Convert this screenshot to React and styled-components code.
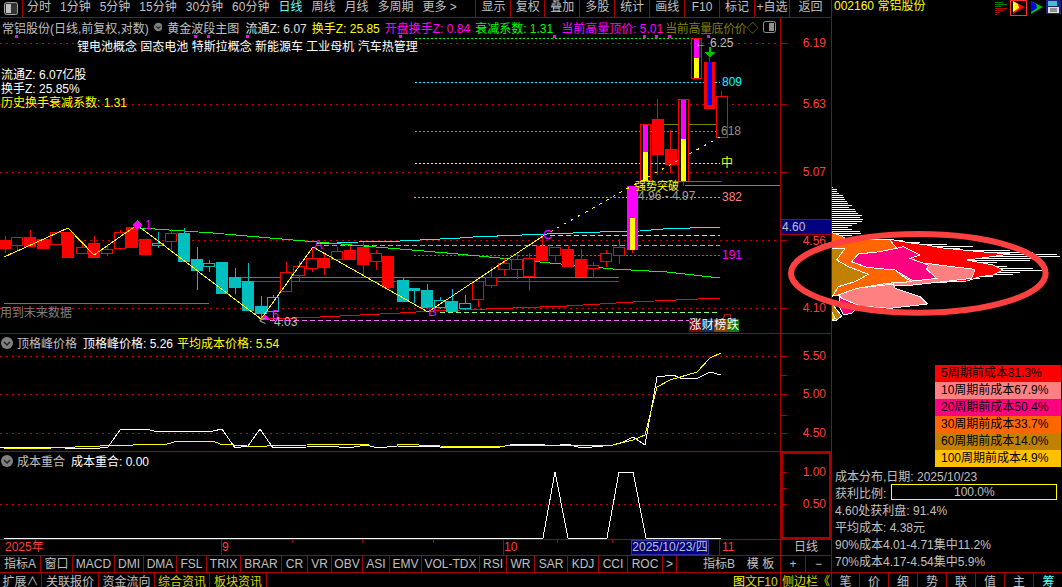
import React from 'react'
import styled, { createGlobalStyle } from 'styled-components'

const LINE = '#a80000'
const GRID = '#d00000'
const GREY = '#c0c0c0'
const AXIS = '#ff3c3c'
const YELLOW = '#ffff00'

const Global = createGlobalStyle`
  html, body { margin: 0; background: #000; }
  body { font: 12px "Liberation Sans", "Noto Sans CJK SC", sans-serif; color: ${GREY}; }
`

const Page = styled.div`
  position: relative;
  display: flex;
  width: 1062px;
  height: 587px;
  overflow: hidden;
  background: #000;
  white-space: nowrap;
`

const Left = styled.div`
  display: flex;
  flex-direction: column;
  width: 832px;
  border-right: 1px solid ${LINE};
  box-sizing: border-box;
`

const Toolbar = styled.div`
  display: flex;
  height: 18px;
  flex: none;
  border-bottom: 1px solid ${LINE};
  box-sizing: border-box;
  line-height: 15px;
`

const ToggleBox = styled.div`
  display: flex;
  align-items: center;
  justify-content: center;
  width: 22px;
  border-right: 1px solid ${LINE};
`

const Periods = styled.div`
  display: flex;
  gap: 9px;
  width: 453px;
  padding-left: 4px;
  box-sizing: border-box;
`

const Period = styled.span`
  color: ${p => (p.$on ? '#54ffff' : GREY)};
`

const ToolButton = styled.div`
  width: ${p => p.$w}px;
  border-left: 1px solid ${LINE};
  box-sizing: border-box;
  text-align: center;
`

const Pane = styled.div`
  position: relative;
  display: flex;
  height: ${p => p.$h}px;
  flex: none;
  border-bottom: 1px solid ${LINE};
  box-sizing: border-box;
`

const Plot = styled.svg`
  display: block;
  width: 780px;
  flex: none;
  border-right: 1px solid ${LINE};
  box-sizing: content-box;
  shape-rendering: crispEdges;
`

const AxisBox = styled.svg`
  display: block;
  flex: 1;
  min-width: 0;
  box-sizing: border-box;
  outline: ${p => (p.$selected ? `2px solid ${LINE}` : 'none')};
  outline-offset: -2px;
  shape-rendering: crispEdges;
`

const Overlay = styled.div`
  position: absolute;
  inset: 0 52px 0 0;
  display: flex;
  flex-direction: column;
  pointer-events: none;
`

const InfoRow = styled.div`
  display: flex;
  align-items: center;
  gap: 5px;
  height: 18px;
  padding: 0 3px 0 2px;
`

const Info = styled.span`
  color: ${p => p.$c || GREY};
  margin-right: ${p => p.$mr || 0}px;
  letter-spacing: ${p => p.$ls || 0}px;
`

const InfoEnd = styled.div`
  display: flex;
  margin-left: auto;
`

const Tags = styled.div`
  margin: 4px 0 0 77px;
  color: #fff;
  line-height: 14px;
`

const Notes = styled.div`
  display: flex;
  flex-direction: column;
  margin: 14px 0 0 1px;
  line-height: 14px;
  color: #fff;
`

const Note = styled.div`
  color: ${p => p.$c || '#fff'};
`

const PaneTitle = styled.div`
  display: flex;
  align-items: center;
  gap: 4px;
  height: 17px;
  padding-left: 1px;
`

const PriceTag = styled.div`
  position: absolute;
  left: 781px;
  top: 201px;
  width: 50px;
  height: 16px;
  background: #000080;
  border-top: 1px solid ${LINE};
  border-bottom: 1px solid ${LINE};
  box-sizing: border-box;
  padding-left: 1px;
  line-height: 14px;
  color: ${GREY};
`

const BadgeRow = styled.div`
  position: absolute;
  left: 689px;
  top: 301px;
  display: flex;
`

const Badge = styled.span`
  width: 12.5px;
  height: 13px;
  line-height: 13px;
  background: ${p => p.$bg};
  color: #fff;
  text-align: center;
`

const TimeRow = styled.div`
  display: flex;
  height: 16px;
  flex: none;
  border-bottom: 1px solid ${LINE};
  box-sizing: border-box;
  line-height: 15px;
`

const TimeCell = styled.div`
  position: relative;
  width: ${p => p.$w}px;
  flex: none;
  padding-left: ${p => p.$pl || 1}px;
  box-sizing: border-box;
  color: ${AXIS};
  &::before {
    content: '';
    position: absolute;
    left: 0;
    top: 0;
    width: 1px;
    height: ${p => (p.$major ? '15px' : p.$minor ? '3px' : '0')};
    background: ${LINE};
  }
`

const DateCell = styled.div`
  width: 78px;
  flex: none;
  box-sizing: border-box;
  background: #000080;
  border: 1px solid #3030a0;
  line-height: 13px;
  text-align: center;
  color: ${GREY};
`

const SideCell = styled.div`
  flex: 1;
  border-left: 1px solid ${LINE};
  text-align: center;
`

const TabRow = styled.div`
  display: flex;
  height: 17px;
  flex: none;
  border-bottom: 1px solid ${LINE};
  box-sizing: border-box;
  line-height: 16px;
`

const Tab = styled.div`
  width: ${p => p.$w}px;
  flex: none;
  border-right: ${p => (p.$open ? '0' : `1px solid ${LINE}`)};
  box-sizing: border-box;
  text-align: ${p => p.$align || 'center'};
  padding-right: ${p => p.$pr || 0}px;
  padding-left: ${p => p.$pl || 0}px;
  color: ${p => p.$c || GREY};
`

const Hot = styled.span`
  color: ${YELLOW};
`

const Spacer = styled.div`
  flex: 1;
`

const BottomRow = styled.div`
  display: flex;
  flex: 1;
  min-height: 0;
  overflow: hidden;
  line-height: 19px;
`

const Side = styled.div`
  display: flex;
  flex-direction: column;
  flex: 1;
  min-width: 0;
`

const SideHead = styled.div`
  display: flex;
  align-items: flex-start;
  height: 14px;
  flex: none;
  padding-left: 2px;
  line-height: 13px;
  color: ${YELLOW};
`

const HeadIcons = styled.div`
  display: flex;
  align-items: flex-start;
  gap: 1px;
  margin: 0 1px 0 auto;
  height: 16px;
`

const Legend = styled.div`
  display: flex;
  flex-direction: column;
  align-self: flex-end;
  width: 126px;
  margin: 351px 1px 0 0;
`

const LegendRow = styled.div`
  height: 17px;
  padding-left: ${p => p.$pad}px;
  line-height: 17px;
  background: ${p => p.$bg};
  color: #000;
  overflow: hidden;
`

const Stats = styled.div`
  display: flex;
  flex-direction: column;
  padding-left: 3px;
`

const StatRow = styled.div`
  display: flex;
  align-items: center;
  height: 17px;
  padding-bottom: 1px;
  box-sizing: border-box;
  color: ${GREY};
`

const RatioBar = styled.div`
  width: 166px;
  height: 16px;
  margin-left: 5px;
  border: 1px solid ${YELLOW};
  box-sizing: border-box;
  text-align: center;
  line-height: 14px;
`

const SideTabs = styled.div`
  display: flex;
  margin-top: auto;
  height: 14px;
  overflow: hidden;
  line-height: 19px;
`

const SideTab = styled.div`
  width: ${p => p.$w}px;
  flex: none;
  border-right: 1px solid ${LINE};
  box-sizing: border-box;
  text-align: center;
  color: ${p => (p.$on ? '#54ffff' : GREY)};
  &:last-child { border-right: 0; }
`

const TopRule = styled.div`
  position: absolute;
  left: 832px;
  right: 0;
  top: 572px;
  height: 1px;
  background: ${LINE};
`

const ChipLayer = styled.svg`
  position: absolute;
  left: 780px;
  top: 180px;
  width: 282px;
  height: 150px;
  pointer-events: none;
`

const ChartText = styled.text`
  font-size: ${p => p.$fs || 12}px;
  fill: ${p => p.$c || GREY};
  shape-rendering: auto;
`

const pts = list => list.map(p => p.join(',')).join(' ')

// x, body top, body bottom, high, low, kind
const candles = [
  [5, 240, 248, 236, 253, 'r'], [17, 237, 245, 237, 251, 'h'], [30, 237, 246, 230, 246, 'r'],
  [43, 239, 248, 239, 248, 'r'], [56, 232, 244, 232, 244, 'h'], [68, 232, 257, 232, 257, 'r'],
  [82, 247, 253, 241, 253, 'h'], [94, 243, 257, 236, 257, 'r'], [107, 249, 253, 245, 256, 'h'],
  [120, 232, 248, 230, 250, 'h'], [132, 227, 247, 227, 247, 'r'], [145, 239, 254, 239, 256, 'r'],
  [158, 243, 245, 232, 248, 'o'], [171, 233, 241, 229, 251, 'h'], [184, 233, 261, 228, 261, 'c'],
  [197, 259, 270, 247, 290, 'c'], [209, 263, 266, 260, 272, 'o'], [222, 262, 293, 262, 293, 'c'],
  [235, 277, 287, 268, 294, 'c'], [248, 281, 310, 263, 310, 'c'], [261, 306, 313, 296, 319, 'c'],
  [273, 297, 311, 295, 320, 'o'], [286, 272, 291, 262, 291, 'h'], [299, 266, 275, 261, 282, 'h'],
  [312, 258, 268, 247, 272, 'h'], [324, 258, 267, 253, 275, 'r'], [337, 251, 259, 247, 259, 'h'],
  [350, 250, 259, 246, 259, 'r'], [363, 247, 264, 242, 275, 'r'], [376, 253, 261, 250, 270, 'h'],
  [388, 256, 287, 256, 290, 'r'], [403, 280, 301, 278, 301, 'c'], [414, 288, 290, 288, 303, 'c'],
  [427, 290, 307, 284, 307, 'c'], [440, 300, 307, 297, 309, 'o'], [452, 301, 311, 289, 311, 'c'],
  [465, 303, 308, 295, 310, 'o'], [478, 281, 299, 281, 307, 'h'], [491, 277, 285, 267, 288, 'h'],
  [504, 263, 269, 258, 276, 'h'], [517, 259, 269, 253, 279, 'h'], [529, 258, 276, 253, 291, 'h'],
  [542, 246, 260, 236, 260, 'r'], [555, 247, 255, 247, 262, 'h'], [568, 249, 266, 245, 266, 'r'],
  [581, 259, 276, 249, 276, 'r'], [593, 265, 268, 262, 278, 'h'], [606, 253, 261, 250, 267, 'h'],
  [619, 247, 255, 239, 264, 'h'], [657.5, 119, 154, 99, 175, 'r'], [670.5, 149, 164, 130, 173, 'r'],
  [721.5, 96, 137, 91, 137, 'h'],
]

// hollow red frame with a magenta / yellow core
const bars = [
  { x: 640, top: 124, mid: 152, bottom: 181, low: 181 },
  { x: 678, top: 99, mid: 139, bottom: 181, low: 186 },
  { x: 691, top: 38, mid: 58, bottom: 78, low: 78 },
]

const gridMain = [43, 104, 172, 240, 308]

const Candle = ({ c }) => {
  const [x, top, bottom, high, low, kind] = c
  const color = kind === 'r' || kind === 'h' ? '#ff0000' : '#00bfbf'
  const hollow = kind === 'h' || kind === 'o'
  return (
    <g>
      <line x1={x} x2={x} y1={high} y2={low} stroke={color} />
      <rect
        x={x - 5.5}
        y={top + 0.5}
        width={11}
        height={bottom - top}
        fill={hollow ? '#000' : color}
        stroke={color}
      />
    </g>
  )
}

const MainChart = () => (
  <Plot viewBox="0 18 780 315" height="315">
    {gridMain.map(y => (
      <line key={y} x1="0" x2="780" y1={y + 0.5} y2={y + 0.5} stroke={GRID} strokeDasharray="2 4" />
    ))}
    <line x1="415" x2="690" y1="38.5" y2="38.5" stroke="#00ff00" strokeDasharray="2 2" />
    <line x1="415" x2="720" y1="82.5" y2="82.5" stroke="#00ffff" strokeDasharray="2 2" />
    <line x1="415" x2="720" y1="131.5" y2="131.5" stroke="#909090" strokeDasharray="2 2" />
    <line x1="415" x2="720" y1="163.5" y2="163.5" stroke={YELLOW} strokeDasharray="2 2" />
    <line x1="414" x2="720" y1="197.5" y2="197.5" stroke="#ff8080" strokeDasharray="2 2" />
    <line x1="414" x2="720" y1="255.5" y2="255.5" stroke="#ff00ff" strokeDasharray="2 2" />
    <line x1="316" x2="720" y1="245.5" y2="245.5" stroke="#ff66ff" strokeDasharray="5 3" />
    <line x1="550" x2="720" y1="235.5" y2="235.5" stroke="#80ff80" strokeDasharray="5 3" />
    <line x1="440" x2="720" y1="312.5" y2="312.5" stroke="#80ff80" strokeDasharray="5 3" />
    <line x1="270" x2="720" y1="320.5" y2="320.5" stroke="#ff66ff" strokeDasharray="5 3" />
    <line x1="240" x2="619" y1="277.5" y2="277.5" stroke="#808000" />
    <line x1="240" x2="619" y1="281.5" y2="281.5" stroke="#c000c0" />
    <line x1="4" x2="209" y1="303.5" y2="303.5" stroke="#808000" />
    <line x1="663" x2="716" y1="124.5" y2="124.5" stroke="#808000" />
    <line x1="685" x2="780" y1="185.5" y2="185.5" stroke="#808080" />
    <polyline
      fill="none"
      stroke="#00ffff"
      points={pts([[316, 244], [380, 241], [400, 241], [420, 240], [460, 238], [473, 237], [547, 234], [600, 232], [640, 231], [663, 229], [690, 228], [720, 227]])}
    />
    <polyline
      fill="none"
      stroke="#00ff00"
      points={pts([[140, 228], [213, 233], [293, 240], [400, 249], [447, 253], [500, 258], [550, 263], [613, 269], [667, 272], [720, 278]])}
    />
    <polyline
      fill="none"
      stroke="#ff0000"
      points={pts([[270, 319], [320, 317], [400, 313], [433, 311], [487, 309], [567, 306], [633, 302], [720, 298]])}
    />
    {candles.map(c => <Candle key={c[0]} c={c} />)}
    {bars.map(b => (
      <g key={b.x}>
        <line x1={b.x + 5.5} x2={b.x + 5.5} y1={b.bottom} y2={b.low} stroke="#ff0000" />
        <rect x={b.x + 0.5} y={b.top + 0.5} width="10" height={b.bottom - b.top} fill="#000" stroke="#ff0000" />
        <rect x={b.x + 3} y={b.top + 1} width="5" height={b.mid - b.top} fill="#ff00ff" />
        <rect x={b.x + 3} y={b.mid} width="5" height={b.bottom - b.mid} fill={YELLOW} />
      </g>
    ))}
    <rect x="704" y="62" width="11" height="47" fill="#ff0000" />
    <rect x="707" y="62" width="5" height="43" fill="#0000ff" />
    <line x1="709.5" x2="709.5" y1="56" y2="62" stroke="#ff0000" />
    <polygon points="709,47 711,47 711,52 715,52 710,58 705,52 709,52" fill="#00c000" />
    <rect x="627" y="186" width="11" height="64" fill="#ff00ff" />
    <rect x="630" y="218" width="5" height="32" fill={YELLOW} />
    <line x1="632.5" x2="632.5" y1="250" y2="253" stroke="#ff0000" />
    <rect x="660" y="181" width="61" height="1" fill="#ff00ff" />
    <polyline
      fill="none"
      stroke={YELLOW}
      points={pts([[4, 257], [68, 228], [94, 255], [137, 225], [261, 319], [313, 247], [428, 312], [543, 236]])}
    />
    <polyline
      fill="none"
      stroke={YELLOW}
      strokeDasharray="3 5"
      points={pts([[543, 236], [632, 186], [720, 137]])}
    />
    <polygon points="137,220 142,225 137,230 132,225" fill="#ff00ff" />
    <polygon points="265,314 270,320 260,320" fill="#ff00ff" />
    <path d="M723 319l2-5h5v5" fill="none" stroke="#a02020" />
    {[16, 195, 208, 247, 400, 554, 644, 656, 669, 708].map(x => (
      <rect key={x} x={x - 1} y="35" width="3" height="3" fill="#ff00ff" />
    ))}
    <ChartText x="145" y="229" $c="#ff00ff">1</ChartText>
    <ChartText x="314" y="249" $c="#ff00ff" $fs="13">A</ChartText>
    <ChartText x="428" y="316" $c="#ff00ff" $fs="13">B</ChartText>
    <ChartText x="543" y="239" $c="#ff00ff" $fs="13">C</ChartText>
    <ChartText x="272" y="319" $c="#ff00ff">5</ChartText>
    <ChartText x="259" y="325" $c="#a0a0a0">{'<'}</ChartText>
    <ChartText x="274" y="326">4.03</ChartText>
    <ChartText x="0" y="317" $c="#808080">用到未来数据</ChartText>
    <ChartText x="695" y="47">←</ChartText>
    <ChartText x="710" y="47">6.25</ChartText>
    <ChartText x="722" y="86" $c="#00ffff">809</ChartText>
    <ChartText x="721" y="135" $c="#909090">618</ChartText>
    <ChartText x="721" y="167" $c={YELLOW}>中</ChartText>
    <ChartText x="635" y="190" $c={YELLOW} $fs="11">强势突破</ChartText>
    <ChartText x="638" y="200" $c="#a0a0a0">4.96 - 4.97</ChartText>
    <ChartText x="722" y="201" $c="#ff8080">382</ChartText>
    <ChartText x="722" y="259" $c="#ff00ff">191</ChartText>
  </Plot>
)

const peakWhite = [[0, 448], [4, 447], [11, 447], [60, 447], [65, 448], [100, 448], [108, 447], [120, 430], [127, 429], [147, 429], [157, 432], [165, 431], [213, 431], [222, 429], [235, 448], [248, 446], [260, 429], [273, 448], [307, 447], [330, 446], [347, 448], [367, 445], [377, 448], [397, 446], [440, 447], [500, 447], [510, 445], [537, 444], [553, 446], [567, 444], [582, 448], [613, 445], [623, 442], [633, 437], [645, 445], [657, 377], [673, 375], [683, 379], [698, 378], [710, 372], [721, 375]]
const peakYellow = [[4, 448], [50, 448], [50, 447], [75, 447], [100, 446], [167, 444], [178, 441], [213, 441], [220, 444], [247, 446], [267, 446], [307, 445], [370, 444], [397, 444], [440, 446], [500, 447], [510, 445], [613, 445], [633, 440], [645, 435], [657, 387], [670, 380], [697, 372], [710, 358], [721, 353]]

const CostChart = () => (
  <Plot viewBox="0 334 780 117" height="117">
    {[356, 394, 433].map(y => (
      <line key={y} x1="0" x2="780" y1={y + 0.5} y2={y + 0.5} stroke={GRID} strokeDasharray="2 4" />
    ))}
    <polyline fill="none" stroke="#fff" points={pts(peakWhite)} />
    <polyline fill="none" stroke={YELLOW} points={pts(peakYellow)} />
  </Plot>
)

const OverlapChart = () => (
  <Plot viewBox="0 452 780 87" height="87">
    <line x1="0" x2="780" y1="504.5" y2="504.5" stroke={GRID} strokeDasharray="2 4" />
    <polyline
      fill="none"
      stroke="#fff"
      points={pts([[4, 538], [543, 538], [555, 472], [568, 538], [607, 538], [619, 472], [633, 472], [646, 538], [721, 538]])}
    />
  </Plot>
)

const Axis = ({ view, labels, ticks, selected }) => (
  <AxisBox viewBox={view} $selected={selected}>
    {ticks.map(y => (
      <line key={y} x1="781" x2="787" y1={y + 0.5} y2={y + 0.5} stroke={LINE} />
    ))}
    {labels.map(([text, y]) => (
      <ChartText key={text} x="826" y={y + 4} textAnchor="end" $c={AXIS}>{text}</ChartText>
    ))}
  </AxisBox>
)

const FoldIcon = () => (
  <svg width="12" height="12" viewBox="0 0 12 12">
    <circle cx="6" cy="6" r="6" fill="#808080" />
    <path d="M3 5l3 3 3-3" fill="none" stroke="#222" strokeWidth="1.5" />
  </svg>
)

const PanelIcon = () => (
  <svg width="13" height="12" viewBox="0 0 13 12">
    <rect x="0.5" y="0.5" width="12" height="11" rx="2" fill="none" stroke="#909090" />
    <rect x="6" y="2" width="5" height="8" fill="#909090" />
  </svg>
)

const SideToggleIcon = () => (
  <svg width="14" height="13" viewBox="0 0 14 13">
    <rect x="0.5" y="0.5" width="13" height="12" rx="2" fill="#333" stroke="#a0a0a0" />
    <rect x="2" y="2" width="5" height="9" fill="#c0c0c0" />
  </svg>
)

const BarsIcon = () => (
  <svg width="14" height="15" viewBox="0 0 14 15">
    <path d="M0 2.5h8M0 4.5h12M0 6.5h6" stroke="#008000" />
    <path d="M0 8.5h12M0 10.5h8M0 12.5h4M0 14.5h2" stroke="#c00000" />
  </svg>
)

const ArrowIcon = ({ a, b, framed }) => (
  <svg width="17" height="16" viewBox="0 0 17 16">
    {framed && <rect x="0.5" y="0.5" width="16" height="15" fill="none" stroke="#ff3030" />}
    <polygon points="3,1 15,7 3,14" fill={a} />
    <polygon points="3,1 8,4 9,8 3,12" fill={b} />
  </svg>
)

const DiskIcon = () => (
  <svg width="15" height="14" viewBox="0 0 15 14">
    <rect x="0" y="0" width="15" height="14" fill="#202080" />
    <rect x="2" y="1" width="9" height="5" fill="#40c0d0" />
    <rect x="2" y="7" width="11" height="6" fill="#e0e0e0" />
    <path d="M4 9h7M4 11h7" stroke="#404040" />
  </svg>
)

const periods = ['分时', '1分钟', '5分钟', '15分钟', '30分钟', '60分钟', '日线', '周线', '月线', '多周期', '更多 >']
const toolButtons = [['显示', 35], ['复权', 34], ['叠加', 35], ['多股', 35], ['统计', 35], ['画线', 35], ['F10', 35], ['标记', 35], ['+自选', 35], ['返回', 42]]

const times = [
  { w: 221, text: '2025年', pl: 5 }, { w: 71, text: '9', major: true }, { w: 70, minor: true }, { w: 71, minor: true },
  { w: 70, minor: true }, { w: 54, text: '10', major: true }, { w: 55, minor: true }, { w: 19, minor: true },
]

const tabs = [['指标A', 41], ['窗口', 32], ['MACD', 42], ['DMI', 29], ['DMA', 33], ['FSL', 30], ['TRIX', 34], ['BRAR', 41], ['CR', 26], ['VR', 24], ['OBV', 31], ['ASI', 27], ['EMV', 32], ['VOL-TDX', 58], ['RSI', 27], ['WR', 28], ['SAR', 33], ['KDJ', 31], ['CCI', 29], ['ROC', 35], ['>', 14]]

const bottoms = [['扩展∧', 42], ['关联报价', 57], ['资金流向', 56], ['综合资讯', 55, '#d8d800'], ['板块资讯', 57, '#d8d800']]

const legend = [
  ['5周期前成本81.3%', '#ff0000', 6],
  ['10周期前成本67.9%', '#ff8080', 6],
  ['20周期前成本50.4%', '#ff0080', 6],
  ['30周期前成本33.7%', '#ff6600', 6],
  ['60周期前成本14.0%', '#c08000', 6],
  ['100周期前成本4.9%', '#ffc000', 6],
]

const sideTabs = ['笔', '价', '细', '势', '联', '值', '主', '筹']

const topStripes = [[15, 157], [21, 160], [27, 170], [33, 172], [39, 178], [45, 188], [51, 192], [57, 195], [63, 200], [69, 205], [75, 215], [81, 208], [87, 225], [93, 228], [99, 235], [105, 245], [111, 240], [117, 248], [123, 245], [129, 230], [135, 215], [141, 205], [147, 215], [153, 240], [159, 242], [165, 215]]
const lowStripes = [[180, 370], [186, 420], [192, 500], [198, 580], [204, 540], [210, 690], [216, 760], [222, 830], [228, 840], [234, 760], [240, 750], [246, 650], [252, 620], [258, 680], [264, 760], [270, 790], [276, 720], [282, 700], [288, 640], [294, 600], [300, 560], [306, 500]]

const chipShapes = [
  ['#ff0000', [[155, 175], [330, 178], [385, 188], [440, 195], [480, 203], [600, 215], [690, 222], [600, 235], [560, 240], [640, 255], [670, 270], [640, 285], [600, 290], [560, 303], [500, 305], [155, 320]]],
  ['#ff8080', [[155, 250], [440, 250], [500, 258], [585, 268], [575, 295], [490, 305], [400, 315], [155, 320]]],
  ['#ff6600', [[155, 158], [185, 168], [200, 178], [330, 180], [350, 205], [300, 215], [235, 222], [215, 245], [260, 262], [345, 270], [370, 290], [395, 305], [320, 310], [230, 325], [175, 345], [155, 345]]],
  ['#ff0080', [[215, 245], [235, 222], [300, 215], [350, 205], [370, 200], [420, 225], [390, 235], [445, 255], [440, 268], [470, 295], [400, 303], [370, 285], [345, 270], [260, 262]]],
  ['#c08000', [[155, 205], [195, 205], [170, 240], [205, 260], [265, 283], [225, 305], [175, 320], [160, 345], [155, 350]]],
  ['#c08000', [[155, 370], [185, 408], [170, 420], [155, 420]]],
  ['#ff0080', [[180, 350], [240, 375], [215, 400], [190, 405], [178, 380]]],
  ['#ff8080', [[175, 345], [230, 325], [340, 312], [345, 325], [420, 350], [442, 372], [330, 385], [240, 378], [185, 355]]],
  ['#ffc000', [[155, 395], [165, 415], [155, 420]]],
]

const ChipProfile = () => (
  <ChipLayer viewBox="0 0 846 450">
    <g shapeRendering="crispEdges">
      {[...topStripes, ...lowStripes].map(([y, x]) => (
        <rect key={y} x="155" y={y} width={x - 155} height="3" fill="#fff" />
      ))}
      {chipShapes.map(([color, shape], i) => (
        <polygon key={i} points={pts(shape)} fill={color} stroke="#fff" strokeWidth="3" />
      ))}
      <line x1="154" x2="154" y1="0" y2="450" stroke={LINE} strokeWidth="3" />
    </g>
    <ellipse cx="415" cy="280" rx="382" ry="118" fill="none" stroke="#ff4040" strokeWidth="18" />
  </ChipLayer>
)

export default function App() {
  return (
    <>
      <Global />
      <Page>
        <Left>
          <Toolbar>
            <ToggleBox><SideToggleIcon /></ToggleBox>
            <Periods>
              {periods.map(p => <Period key={p} $on={p === '日线'}>{p}</Period>)}
            </Periods>
            {toolButtons.map(([t, w]) => <ToolButton key={t} $w={w}>{t}</ToolButton>)}
          </Toolbar>

          <Pane $h={316}>
            <MainChart />
            <Axis view="781 18 50 315" labels={[['6.19', 43], ['5.63', 104], ['5.07', 172], ['4.56', 241], ['4.10', 308]]} ticks={gridMain} />
            <Overlay>
              <InfoRow>
                <Info>常铝股份(日线,前复权,对数)</Info>
                <FoldIcon />
                <Info $mr={1}>黄金波段主图</Info>
                <Info $c="#e0e0e0">流通Z: 6.07</Info>
                <Info $c={YELLOW}>换手Z: 25.85</Info>
                <Info $c="#ff00ff">开盘换手Z: 0.84</Info>
                <Info $c="#00ff00" $mr={3}>衰减系数: 1.31</Info>
                <Info $c="#ff00ff" $mr={-3}>当前高量顶价: 5.01</Info>
                <Info $c="#808000" $ls={-0.4}>当前高量底价价◇</Info>
                <InfoEnd><PanelIcon /></InfoEnd>
              </InfoRow>
              <Tags>锂电池概念 固态电池 特斯拉概念 新能源车 工业母机 汽车热管理</Tags>
              <Notes>
                <Note>流通Z: 6.07亿股</Note>
                <Note>换手Z: 25.85%</Note>
                <Note $c={YELLOW}>历史换手衰减系数: 1.31</Note>
              </Notes>
            </Overlay>
            <BadgeRow>
              <Badge $bg="#800000">涨</Badge>
              <Badge $bg="#003060">财</Badge>
              <Badge $bg="#804000">榜</Badge>
              <Badge $bg="#008000">跌</Badge>
            </BadgeRow>
            <PriceTag>4.60</PriceTag>
          </Pane>

          <Pane $h={118}>
            <CostChart />
            <Axis view="781 334 50 117" labels={[['5.50', 356], ['5.00', 394], ['4.50', 433]]} ticks={[356, 375, 394, 415, 433]} />
            <Overlay>
              <PaneTitle>
                <FoldIcon />
                <Info $mr={2}>顶格峰价格</Info>
                <Info $c="#fff">顶格峰价格: 5.26</Info>
                <Info $c={YELLOW}>平均成本价格: 5.54</Info>
              </PaneTitle>
            </Overlay>
          </Pane>

          <Pane $h={88}>
            <OverlapChart />
            <Axis view="781 452 50 87" labels={[['1.00', 472], ['0.50', 504]]} ticks={[472, 488, 504]} selected />
            <Overlay>
              <PaneTitle>
                <FoldIcon />
                <Info $mr={2}>成本重合</Info>
                <Info $c="#fff">成本重合: 0.00</Info>
              </PaneTitle>
            </Overlay>
          </Pane>

          <TimeRow>
            {times.map((t, i) => (
              <TimeCell key={i} $w={t.w} $major={t.major} $minor={t.minor} $pl={t.pl}>{t.text}</TimeCell>
            ))}
            <DateCell>2025/10/23/四</DateCell>
            <TimeCell $w={10} />
            <TimeCell $w={61} $major $pl={3}>11</TimeCell>
            <SideCell>日线</SideCell>
          </TimeRow>

          <TabRow>
            {tabs.map(([t, w]) => <Tab key={t} $w={w}>{t}</Tab>)}
            <Tab $w={64} $align="right" $pr={6} $open>指标B</Tab>
            <Tab $w={40}>模 板</Tab>
            <Tab $w={25}>+</Tab>
            <Tab $w={25} $open>−</Tab>
          </TabRow>

          <BottomRow>
            {bottoms.map(([t, w, c]) => <Tab key={t} $w={w} $c={c}>{t}</Tab>)}
            <Spacer />
            <Tab $w={48} $c="#d8d800" $align="left"><Hot>图</Hot>文F10</Tab>
            <Tab $w={50} $c="#d8d800" $align="left" $pl={1} $open>侧边栏《</Tab>
          </BottomRow>
        </Left>

        <Side>
          <SideHead>
            002160 常铝股份
            <HeadIcons>
              <BarsIcon />
              <ArrowIcon a="#ff0000" b={YELLOW} framed />
              <ArrowIcon a="#00c000" b="#0000ff" />
              <DiskIcon />
            </HeadIcons>
          </SideHead>
          <Legend>
            {legend.map(([t, bg, pad]) => <LegendRow key={t} $bg={bg} $pad={pad}>{t}</LegendRow>)}
          </Legend>
          <Stats>
            <StatRow>成本分布,日期: 2025/10/23</StatRow>
            <StatRow>获利比例:<RatioBar>100.0%</RatioBar></StatRow>
            <StatRow>4.60处获利盘: 91.4%</StatRow>
            <StatRow>平均成本: 4.38元</StatRow>
            <StatRow>90%成本4.01-4.71集中11.2%</StatRow>
            <StatRow>70%成本4.17-4.54集中5.9%</StatRow>
          </Stats>
          <SideTabs>
            {sideTabs.map((t, i) => (
              <SideTab key={t} $w={i === 0 ? 28 : 29} $on={t === '筹'}>{t}</SideTab>
            ))}
          </SideTabs>
        </Side>
        <TopRule />
        <ChipProfile />
      </Page>
    </>
  )
}
